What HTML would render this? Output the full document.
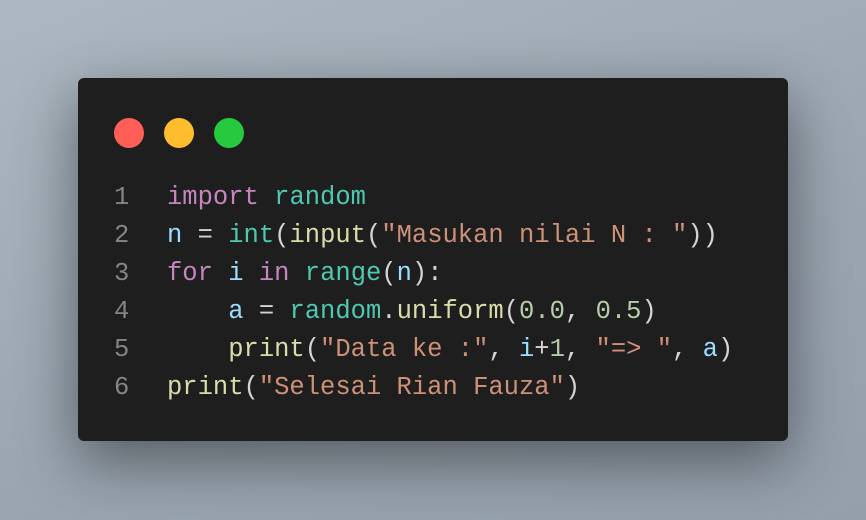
<!DOCTYPE html>
<html><head><style>
html,body{margin:0;padding:0;}
body{width:866px;height:520px;background:linear-gradient(160deg,#acb7c1 0%,#9aa5b0 60%,#949fab 100%);position:relative;overflow:hidden;font-family:"Liberation Mono",monospace;}
.win{position:absolute;left:78px;top:78px;width:710px;height:363px;background:#1e1e1e;border-radius:6px;box-shadow:0 20px 60px rgba(0,0,0,0.45);}
.dot{position:absolute;top:40px;width:30px;height:30px;border-radius:50%;}
.code{position:absolute;left:0;top:101px;font-size:25.5px;line-height:38px;color:#d4d4d4;white-space:pre;}
.ln{display:inline-block;width:89px;text-align:left;padding-left:36px;box-sizing:border-box;color:#858585;}
.k{color:#c586c0}.m{color:#4ec9b0}.v{color:#9cdcfe}.f{color:#dcdcaa}.s{color:#ce9178}.n{color:#b5cea8}
</style></head><body>
<div class="win">
<div class="dot" style="left:36px;background:#ff5f56"></div>
<div class="dot" style="left:86px;background:#ffbd2e"></div>
<div class="dot" style="left:136px;background:#27c93f"></div>
<div class="code"><span class="ln">1</span><span class="k">import</span> <span class="m">random</span>
<span class="ln">2</span><span class="v">n</span> = <span class="m">int</span>(<span class="f">input</span>(<span class="s">"Masukan nilai N : "</span>))
<span class="ln">3</span><span class="k">for</span> <span class="v">i</span> <span class="k">in</span> <span class="m">range</span>(<span class="v">n</span>):
<span class="ln">4</span>    <span class="v">a</span> = <span class="m">random</span>.<span class="f">uniform</span>(<span class="n">0.0</span>, <span class="n">0.5</span>)
<span class="ln">5</span>    <span class="f">print</span>(<span class="s">"Data ke :"</span>, <span class="v">i</span>+<span class="n">1</span>, <span class="s">"=&gt; "</span>, <span class="v">a</span>)
<span class="ln">6</span><span class="f">print</span>(<span class="s">"Selesai Rian Fauza"</span>)</div>
</div>
</body></html>
